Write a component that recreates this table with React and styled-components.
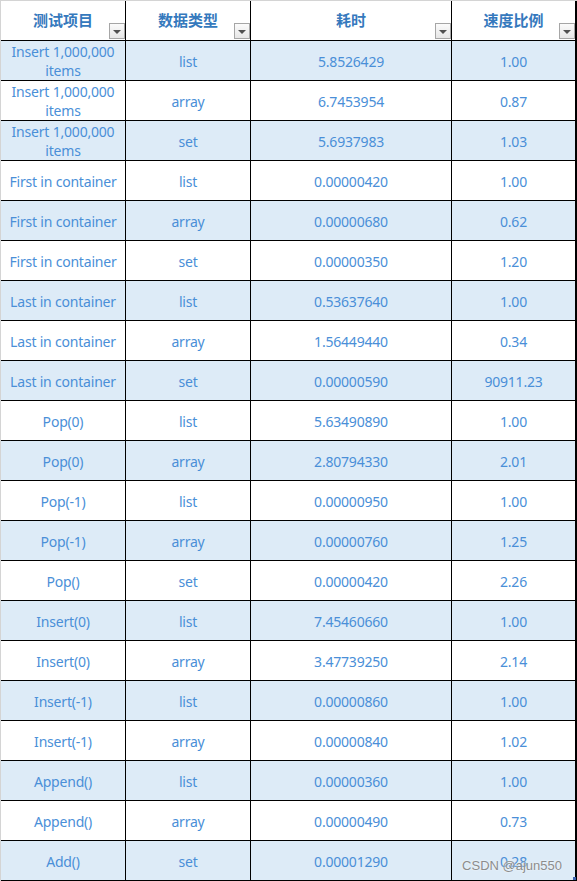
import React from "react";
import styled, { createGlobalStyle } from "styled-components";

const Global = createGlobalStyle`
  html, body { margin: 0; padding: 0; background: #fff; }
  body { font-family: "Noto Sans", "Noto Sans CJK SC", sans-serif; }
`;

const Sheet = styled.div`
  position: relative;
  width: 577px;
  height: 881px;
  box-sizing: border-box;
  border-left: 1px solid #d4d4d4;
  border-top: 1px solid #d4d4d4;
  overflow: hidden;
`;

const Grid = styled.div`
  display: grid;
  grid-template-columns: 125px 125px 201px 125px;
  grid-auto-rows: 40px;
`;

const Cell = styled.div`
  box-sizing: border-box;
  border-right: ${(p) => (p.$last ? "2px" : "1px")} solid #000;
  border-bottom: 1px solid #000;
  background: ${(p) => (p.$shaded ? "#ddebf7" : "#fff")};
  color: #4a8fd8;
  font-size: 14px;
  line-height: 19px;
  display: flex;
  align-items: center;
  justify-content: center;
  text-align: center;
  padding: 1px 2px 0;
  letter-spacing: -0.2px;
`;

const HeadCell = styled(Cell)`
  position: relative;
  height: 40px;
  color: #3579bd;
  font-weight: bold;
  font-family: "Noto Sans CJK SC", sans-serif;
  font-size: 15px;
  padding: 0 0 2px;
  letter-spacing: 0;
`;

const FilterBtn = styled.span`
  position: absolute;
  right: 0;
  bottom: 1px;
  width: 16px;
  height: 16px;
  box-sizing: border-box;
  border: 1px solid #a6a6a6;
  background: linear-gradient(#fbfbfb, #e6e6e6);
  display: flex;
  align-items: center;
  justify-content: center;
  &::after {
    content: "";
    border-left: 4px solid transparent;
    border-right: 4px solid transparent;
    border-top: 4px solid #505050;
    margin-top: 1px;
  }
`;

const Watermark = styled.div`
  position: absolute;
  right: 15px;
  bottom: 8px;
  font-family: "Liberation Sans", Arial, sans-serif;
  font-size: 13px;
  color: #8c8c8c;
  text-shadow: 0 0 2px rgba(255, 255, 255, 0.9);
  pointer-events: none;
`;

const Handle = styled.span`
  position: absolute;
  right: 1px;
  bottom: 1px;
  width: 3px;
  height: 3px;
  background: #3a62b0;
`;

const headers = ["测试项目", "数据类型", "耗时", "速度比例"];

const rows = [
  ["Insert 1,000,000 items", "list", "5.8526429", "1.00"],
  ["Insert 1,000,000 items", "array", "6.7453954", "0.87"],
  ["Insert 1,000,000 items", "set", "5.6937983", "1.03"],
  ["First in container", "list", "0.00000420", "1.00"],
  ["First in container", "array", "0.00000680", "0.62"],
  ["First in container", "set", "0.00000350", "1.20"],
  ["Last in container", "list", "0.53637640", "1.00"],
  ["Last in container", "array", "1.56449440", "0.34"],
  ["Last in container", "set", "0.00000590", "90911.23"],
  ["Pop(0)", "list", "5.63490890", "1.00"],
  ["Pop(0)", "array", "2.80794330", "2.01"],
  ["Pop(-1)", "list", "0.00000950", "1.00"],
  ["Pop(-1)", "array", "0.00000760", "1.25"],
  ["Pop()", "set", "0.00000420", "2.26"],
  ["Insert(0)", "list", "7.45460660", "1.00"],
  ["Insert(0)", "array", "3.47739250", "2.14"],
  ["Insert(-1)", "list", "0.00000860", "1.00"],
  ["Insert(-1)", "array", "0.00000840", "1.02"],
  ["Append()", "list", "0.00000360", "1.00"],
  ["Append()", "array", "0.00000490", "0.73"],
  ["Add()", "set", "0.00001290", "0.28"],
];

export default function App() {
  return (
    <>
      <Global />
      <Sheet>
        <Grid>
          {headers.map((h, i) => (
            <HeadCell key={h} $last={i === 3}>
              {h}
              <FilterBtn />
            </HeadCell>
          ))}
          {rows.map((r, ri) =>
            r.map((v, ci) => (
              <Cell key={ri + "-" + ci} $shaded={ri % 2 === 0} $last={ci === 3}>
                {v}
              </Cell>
            ))
          )}
        </Grid>
        <Watermark>CSDN @ajun550</Watermark>
        <Handle />
      </Sheet>
    </>
  );
}
